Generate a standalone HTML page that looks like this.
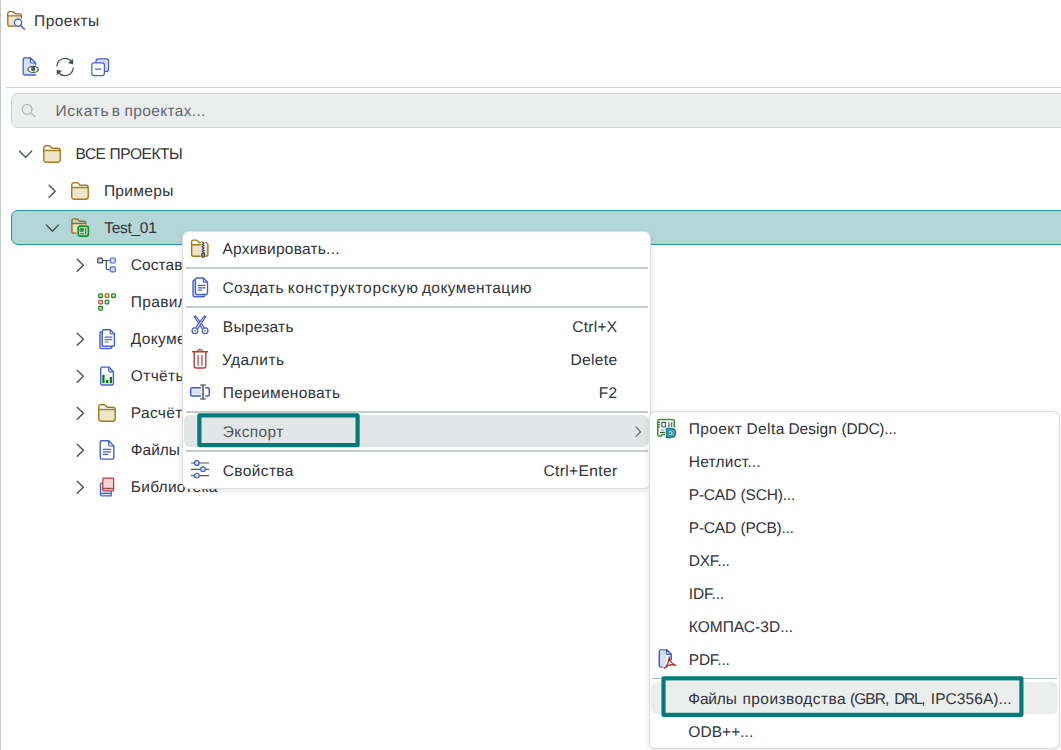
<!DOCTYPE html>
<html lang="ru"><head><meta charset="utf-8"><title>Проекты</title>
<style>
html,body{margin:0;padding:0;}
body{width:1061px;height:750px;overflow:hidden;background:#fff;position:relative;font-family:"Liberation Sans",sans-serif;font-size:15.5px;color:#26272e;text-rendering:geometricPrecision;}
.abs{position:absolute;}
.t{position:absolute;white-space:nowrap;line-height:20px;height:20px;}
svg{position:absolute;overflow:visible;}
.sep{position:absolute;height:2px;background:#c2cece;}
</style></head><body>
<!-- left border -->
<div class="abs" style="left:0;top:0;width:1px;height:750px;background:#bfcbcb"></div>
<!-- hr -->
<div class="abs" style="left:6px;top:87px;width:1055px;height:1px;background:#c8d2d2"></div>
<!-- search -->
<div class="abs" style="left:11px;top:93px;width:1070px;height:33px;background:#eceeee;border:1px solid #c8d4d4;border-radius:7px;"></div>
<!-- selected row -->
<div class="abs" style="left:11px;top:210px;width:1070px;height:33px;background:#b3d6d6;border:1px solid #1f9a96;border-radius:7px;"></div>
<div class="t" style="left:34.10px;top:12.00px;letter-spacing:0.466px;color:#31333b">Проекты</div>
<div class="t" style="left:55.50px;top:102.00px;letter-spacing:0.706px;color:#63676c">Искать</div>
<div class="t" style="left:111.80px;top:102.00px;letter-spacing:0.000px;color:#63676c">в</div>
<div class="t" style="left:124.60px;top:102.00px;letter-spacing:0.336px;color:#63676c">проектах...</div>
<div class="t" style="left:75.60px;top:145.00px;letter-spacing:-0.530px;color:#31333b">ВСЕ</div>
<div class="t" style="left:109.60px;top:145.00px;letter-spacing:-0.428px;color:#31333b">ПРОЕКТЫ</div>
<div class="t" style="left:103.90px;top:182.00px;letter-spacing:0.339px;color:#31333b">Примеры</div>
<div class="t" style="left:104.30px;top:219.00px;letter-spacing:-0.299px;color:#31333b">Test_01</div>
<div class="t" style="left:130.80px;top:256.00px;letter-spacing:0.051px;color:#31333b">Состав</div>
<div class="t" style="left:130.80px;top:293.00px;letter-spacing:0.350px;color:#31333b">Правила</div>
<div class="t" style="left:130.80px;top:330.00px;letter-spacing:0.350px;color:#31333b">Документы</div>
<div class="t" style="left:130.80px;top:367.00px;letter-spacing:0.350px;color:#31333b">Отчёты</div>
<div class="t" style="left:130.80px;top:404.00px;letter-spacing:0.350px;color:#31333b">Расчёты</div>
<div class="t" style="left:130.80px;top:441.00px;letter-spacing:-0.012px;color:#31333b">Файлы</div>
<div class="t" style="left:130.80px;top:478.00px;letter-spacing:0.258px;color:#31333b">Библиотека</div>

<!-- context menu -->
<div class="abs" id="menu" style="left:182px;top:230.5px;width:467.2px;height:256.5px;background:#fff;border:1px solid rgba(0,0,0,.13);border-radius:7px;box-shadow:0 2px 7px rgba(0,0,0,.10);"></div>
<div class="abs" style="left:184px;top:415px;width:464.5px;height:31.6px;background:#e3e6e6;border-radius:6px;"></div>
<div class="sep" style="left:186px;top:267px;width:462px;"></div>
<div class="sep" style="left:186px;top:306px;width:462px;"></div>
<div class="sep" style="left:186px;top:411px;width:462px;"></div>
<div class="sep" style="left:186px;top:450px;width:462px;"></div>
<div class="t" style="left:222.50px;top:240.00px;letter-spacing:0.231px;color:#31333b">Архивировать...</div>
<div class="t" style="left:222.50px;top:279.00px;letter-spacing:0.349px;color:#31333b">Создать</div>
<div class="t" style="left:287.80px;top:279.00px;letter-spacing:0.694px;color:#31333b">конструкторскую</div>
<div class="t" style="left:421.90px;top:279.00px;letter-spacing:0.432px;color:#31333b">документацию</div>
<div class="t" style="left:222.80px;top:318.00px;letter-spacing:0.250px;color:#31333b">Вырезать</div>
<div class="t" style="left:221.90px;top:351.00px;letter-spacing:0.502px;color:#31333b">Удалить</div>
<div class="t" style="left:222.80px;top:384.00px;letter-spacing:0.305px;color:#31333b">Переименовать</div>
<div class="t" style="left:222.80px;top:423.00px;letter-spacing:0.392px;color:#4f545a">Экспорт</div>
<div class="t" style="left:222.80px;top:462.00px;letter-spacing:0.362px;color:#31333b">Свойства</div>
<div class="t" style="left:572.30px;top:318.00px;letter-spacing:0.260px;color:#31333b">Ctrl+X</div>
<div class="t" style="left:570.40px;top:351.00px;letter-spacing:0.378px;color:#31333b">Delete</div>
<div class="t" style="left:598.70px;top:384.00px;letter-spacing:0.306px;color:#31333b">F2</div>
<div class="t" style="left:543.50px;top:462.00px;letter-spacing:0.376px;color:#31333b">Ctrl+Enter</div>


<!-- submenu -->
<div class="abs" id="sub" style="left:648.8px;top:410.6px;width:409.2px;height:336px;background:#fff;border:1px solid rgba(0,0,0,.13);border-radius:7px;box-shadow:0 2px 7px rgba(0,0,0,.10);"></div>
<div class="abs" style="left:651px;top:682px;width:407px;height:32px;background:#eceeee;border-radius:6px;"></div>
<div class="abs" style="left:652px;top:678.3px;width:405px;height:1.2px;background:#b5c0c0"></div>
<div class="t" style="left:688.80px;top:420.00px;letter-spacing:0.387px;color:#31333b">Проект</div>
<div class="t" style="left:746.50px;top:420.00px;letter-spacing:0.403px;color:#31333b">Delta</div>
<div class="t" style="left:788.40px;top:420.00px;letter-spacing:0.030px;color:#31333b">Design</div>
<div class="t" style="left:841.50px;top:420.00px;letter-spacing:-0.218px;color:#31333b">(DDC)...</div>
<div class="t" style="left:688.80px;top:453.00px;letter-spacing:0.221px;color:#31333b">Нетлист...</div>
<div class="t" style="left:688.80px;top:486.00px;letter-spacing:-0.234px;color:#31333b">P-CAD</div>
<div class="t" style="left:740.60px;top:486.00px;letter-spacing:-0.167px;color:#31333b">(SCH)...</div>
<div class="t" style="left:688.80px;top:519.00px;letter-spacing:-0.234px;color:#31333b">P-CAD</div>
<div class="t" style="left:740.60px;top:519.00px;letter-spacing:-0.275px;color:#31333b">(PCB)...</div>
<div class="t" style="left:688.80px;top:552.00px;letter-spacing:-0.241px;color:#31333b">DXF...</div>
<div class="t" style="left:688.80px;top:585.00px;letter-spacing:-0.174px;color:#31333b">IDF...</div>
<div class="t" style="left:688.80px;top:618.00px;letter-spacing:0.022px;color:#31333b">КОМПАС-3D...</div>
<div class="t" style="left:688.80px;top:651.00px;letter-spacing:-0.241px;color:#31333b">PDF...</div>
<div class="t" style="left:688.30px;top:690.00px;letter-spacing:-0.188px;color:#31333b">Файлы</div>
<div class="t" style="left:742.40px;top:690.00px;letter-spacing:0.452px;color:#31333b">производства</div>
<div class="t" style="left:850.00px;top:690.00px;letter-spacing:-0.966px;color:#31333b">(GBR,</div>
<div class="t" style="left:894.20px;top:690.00px;letter-spacing:-1.343px;color:#31333b">DRL,</div>
<div class="t" style="left:930.80px;top:690.00px;letter-spacing:0.067px;color:#31333b">IPC356A)...</div>
<div class="t" style="left:688.30px;top:723.00px;letter-spacing:0.054px;color:#31333b">ODB++...</div>

<svg id="icons" width="1061" height="750" viewBox="0 0 1061 750" style="left:0;top:0;pointer-events:none" fill="none" stroke-linecap="round" stroke-linejoin="round">


<!-- title icon -->
<path d="M7.8 16.4 L21.4 16.4 L21.4 19 L16 26.2 L9.8 26.2 Q7.8 26.2 7.8 24.2 Z" fill="#efe4c5"/>
<path d="M15.4 26.2 L9.8 26.2 Q7.8 26.2 7.8 24.2 L7.8 13.6 Q7.8 11.6 9.8 11.6 L12.4 11.6 Q13.4 11.6 14 12.4 L14.6 13.2 Q15.1 13.9 16 13.9 L19.6 13.9 Q21.4 13.9 21.4 15.6 L21.4 18" fill="none" stroke="#9a7014" stroke-width="1.3"/>
<path d="M7.8 15.9 L21.4 15.9" stroke="#9a7014" stroke-width="1.3"/>
<circle cx="18" cy="22.6" r="4.6" fill="#fff" stroke="none"/>
<circle cx="18" cy="22.6" r="3.6" fill="#fff" stroke="#4a5fd2" stroke-width="1.4"/>
<path d="M20.7 25.4 L24.4 29.3" stroke="#4a5fd2" stroke-width="1.5"/>

<!-- toolbar: doc + eye -->
<path d="M35.6 75 L24.7 75 Q23.2 75 23.2 73.5 L23.2 59.3 Q23.2 57.8 24.7 57.8 L30.4 57.8 L35.6 63 L35.6 65" fill="#d6e0fb" stroke="#4a5fd2" stroke-width="1.3"/>
<path d="M30.4 57.8 L30.4 61.8 Q30.4 63 31.6 63 L35.6 63 Z" fill="#fff" stroke="#4a5fd2" stroke-width="1.2"/>
<ellipse cx="33.1" cy="69.4" rx="6.4" ry="4.2" fill="#fff"/>
<ellipse cx="33.1" cy="69.4" rx="5.2" ry="3" fill="#fff" stroke="#454e4e" stroke-width="1.3"/>
<circle cx="33.2" cy="68.9" r="2.1" fill="#454e4e"/>
<circle cx="32.5" cy="68.2" r="0.6" fill="#9aa0a0"/>

<!-- toolbar: refresh -->
<path d="M56.8 66 A8.3 8.3 0 0 1 71.6 61.6" stroke="#454e4e" stroke-width="1.25"/>
<path d="M73.2 68 A8.3 8.3 0 0 1 58.4 72.4" stroke="#454e4e" stroke-width="1.25"/>
<path d="M72.8 59.6 L73 63.9 L68.8 63 Z" fill="#454e4e" stroke="#454e4e" stroke-width="0.6"/>
<path d="M57.2 74.4 L57 70.1 L61.2 71 Z" fill="#454e4e" stroke="#454e4e" stroke-width="0.6"/>

<!-- toolbar: collapse -->
<rect x="96" y="58.8" width="12.6" height="12.6" rx="2.2" fill="#d6e0fb" stroke="#4a5fd2" stroke-width="1.25"/>
<rect x="91.8" y="62.9" width="12.6" height="12.6" rx="2.2" fill="#fff" stroke="#4a5fd2" stroke-width="1.25"/>
<path d="M95.4 69 L100.8 69" stroke="#4a5fd2" stroke-width="1.25"/>

<!-- search magnifier -->
<circle cx="27.1" cy="109.3" r="4.9" stroke="#a6adad" stroke-width="1.05"/>
<path d="M30.7 112.9 L34.9 116.6" stroke="#a6adad" stroke-width="1.05"/>

<!-- tree chevrons -->
<g transform="translate(19.6 151.2)"><path d="M0 0 L6 6.2 L12 0" stroke="#465050" stroke-width="1.35" fill="none"/></g>
<g transform="translate(49 185.2)"><path d="M0 0 L6.2 6 L0 12" stroke="#465050" stroke-width="1.35" fill="none"/></g>
<g transform="translate(46.4 225)"><path d="M0 0 L6 6.2 L12 0" stroke="#465050" stroke-width="1.35" fill="none"/></g>
<g transform="translate(77.2 259.2)"><path d="M0 0 L6.2 6 L0 12" stroke="#465050" stroke-width="1.35" fill="none"/></g>
<g transform="translate(77.2 333.2)"><path d="M0 0 L6.2 6 L0 12" stroke="#465050" stroke-width="1.35" fill="none"/></g>
<g transform="translate(77.2 370.2)"><path d="M0 0 L6.2 6 L0 12" stroke="#465050" stroke-width="1.35" fill="none"/></g>
<g transform="translate(77.2 407.2)"><path d="M0 0 L6.2 6 L0 12" stroke="#465050" stroke-width="1.35" fill="none"/></g>
<g transform="translate(77.2 444.2)"><path d="M0 0 L6.2 6 L0 12" stroke="#465050" stroke-width="1.35" fill="none"/></g>
<g transform="translate(77.2 481.2)"><path d="M0 0 L6.2 6 L0 12" stroke="#465050" stroke-width="1.35" fill="none"/></g>

<!-- folders -->
<g transform="translate(43 145)">
  <path d="M0.75 5.6 L17.25 5.6 L17.25 14.8 Q17.25 17.25 14.8 17.25 L3.2 17.25 Q0.75 17.25 0.75 14.8 Z" fill="#efe4c5" stroke="none"/>
  <path d="M0.75 3.2 Q0.75 0.75 3.2 0.75 L5.8 0.75 Q7 0.75 7.7 1.7 L8.5 2.7 Q9 3.3 9.8 3.3 L15 3.3 Q17.25 3.3 17.25 5.5 L17.25 14.8 Q17.25 17.25 14.8 17.25 L3.2 17.25 Q0.75 17.25 0.75 14.8 Z" fill="none" stroke="#a57d22" stroke-width="1.4"/>
  <path d="M0.75 5.5 L17.25 5.5" stroke="#a57d22" stroke-width="1.5"/></g>
<g transform="translate(71 182)">
  <path d="M0.75 5.6 L17.25 5.6 L17.25 14.8 Q17.25 17.25 14.8 17.25 L3.2 17.25 Q0.75 17.25 0.75 14.8 Z" fill="#efe4c5" stroke="none"/>
  <path d="M0.75 3.2 Q0.75 0.75 3.2 0.75 L5.8 0.75 Q7 0.75 7.7 1.7 L8.5 2.7 Q9 3.3 9.8 3.3 L15 3.3 Q17.25 3.3 17.25 5.5 L17.25 14.8 Q17.25 17.25 14.8 17.25 L3.2 17.25 Q0.75 17.25 0.75 14.8 Z" fill="none" stroke="#a57d22" stroke-width="1.4"/>
  <path d="M0.75 5.5 L17.25 5.5" stroke="#a57d22" stroke-width="1.5"/></g>
<g transform="translate(98 404)">
  <path d="M0.75 5.6 L17.25 5.6 L17.25 14.8 Q17.25 17.25 14.8 17.25 L3.2 17.25 Q0.75 17.25 0.75 14.8 Z" fill="#efe4c5" stroke="none"/>
  <path d="M0.75 3.2 Q0.75 0.75 3.2 0.75 L5.8 0.75 Q7 0.75 7.7 1.7 L8.5 2.7 Q9 3.3 9.8 3.3 L15 3.3 Q17.25 3.3 17.25 5.5 L17.25 14.8 Q17.25 17.25 14.8 17.25 L3.2 17.25 Q0.75 17.25 0.75 14.8 Z" fill="none" stroke="#a57d22" stroke-width="1.4"/>
  <path d="M0.75 5.5 L17.25 5.5" stroke="#a57d22" stroke-width="1.5"/></g>

<!-- project folder -->
<path d="M71.9 223.6 L85.6 223.6 L85.6 226 L77 226 L77 233.1 L73.8 233.1 Q71.9 233.1 71.9 231.2 Z" fill="#e9dfc0"/>
<path d="M76 233.1 L73.8 233.1 Q71.9 233.1 71.9 231.2 L71.9 220.8 Q71.9 218.9 73.8 218.9 L76.4 218.9 Q77.4 218.9 78 219.7 L78.6 220.5 Q79.2 221.3 80.2 221.3 L83.8 221.3 Q85.6 221.3 85.6 223 L85.6 223.6" fill="none" stroke="#9a6d10" stroke-width="1.4"/>
<path d="M71.9 223.6 L85.6 223.6" stroke="#9a6d10" stroke-width="1.5"/>
<rect x="78.2" y="226.1" width="10.2" height="10" rx="2.2" fill="#bfe0c4" stroke="#1f8c2c" stroke-width="1.6"/>
<rect x="80.4" y="228.3" width="3" height="3" fill="#2a9a3a" stroke="#1f8c2c" stroke-width="0.8"/>
<path d="M80.2 233.7 L83.6 233.7 M85.7 228.2 L85.7 233.8" stroke="#1f8c2c" stroke-width="1.1"/>

<!-- Состав -->
<rect x="97.7" y="258.1" width="4.8" height="4.8" rx="1" fill="#d7dcdc" stroke="#454e4e" stroke-width="1.2"/>
<path d="M103.4 260.5 L109 260.5 M106.3 260.5 L106.3 268.4 Q106.3 269.5 107.4 269.5 L109 269.5" stroke="#454e4e" stroke-width="1.2"/>
<rect x="110.3" y="258" width="5" height="5" rx="1.2" fill="#d6e0fb" stroke="#5468d8" stroke-width="1.2"/>
<rect x="110.3" y="266.9" width="5" height="5" rx="1.2" fill="#d6e0fb" stroke="#5468d8" stroke-width="1.2"/>

<!-- Правила -->
<g stroke-width="1.3">
<rect x="98.8" y="293.9" width="3.6" height="3.6" rx="0.8" fill="#cfe8d2" stroke="#1f8c2c"/>
<rect x="105.2" y="293.9" width="3.6" height="3.6" rx="0.8" fill="#f3e6c8" stroke="#a07418"/>
<rect x="111.7" y="293.9" width="3.6" height="3.6" rx="0.8" fill="#cfe8d2" stroke="#1f8c2c"/>
<rect x="98.8" y="300.3" width="3.6" height="3.6" rx="0.8" fill="#fde0e0" stroke="#c84a4a"/>
<rect x="105.2" y="300.3" width="3.6" height="3.6" rx="0.8" fill="#cfe8d2" stroke="#1f8c2c"/>
<rect x="98.8" y="306.5" width="3.6" height="3.6" rx="0.8" fill="#cfe8d2" stroke="#1f8c2c"/>
</g>

<!-- Документы -->
<g transform="translate(99.2 329)">
  <path d="M3 2.8 L2.2 2.8 Q0.75 2.8 0.75 4.3 L0.75 18 Q0.75 19.6 2.3 19.6 L11 19.6 Q12.5 19.6 12.5 18.2" fill="#d6e0fb" stroke="#4a5fd2" stroke-width="1.4"/>
  <path d="M4.6 0.75 L11 0.75 L15.2 5 L15.2 15.8 Q15.2 17.3 13.7 17.3 L4.6 17.3 Q3.1 17.3 3.1 15.8 L3.1 2.25 Q3.1 0.75 4.6 0.75 Z" fill="#fff" stroke="#4a5fd2" stroke-width="1.4"/>
  <path d="M11 0.75 L11 4 Q11 5 12 5 L15.2 5" stroke="#4a5fd2" stroke-width="1.2"/>
  <path d="M6 8.2 L12.6 8.2 M6 10.6 L12.6 10.6 M6 13 L9 13" stroke="#4a5fd2" stroke-width="1.2"/></g>

<!-- Отчёты -->
<path d="M102.2 367.1 L108.8 367.1 L113.4 371.8 L113.4 383.5 Q113.4 385 111.9 385 L102.2 385 Q100.7 385 100.7 383.5 L100.7 368.6 Q100.7 367.1 102.2 367.1 Z" fill="#fff" stroke="#4a5fd2" stroke-width="1.4"/>
<path d="M108.8 367.1 L108.8 370.8 Q108.8 371.8 109.8 371.8 L113.4 371.8" stroke="#4a5fd2" stroke-width="1.2"/>
<rect x="102.3" y="374.8" width="2.3" height="8.4" fill="#0a7a10"/>
<rect x="106" y="380" width="2.3" height="3.2" fill="#0a7a10"/>
<rect x="109.7" y="377" width="2.3" height="6.2" fill="#0a7a10"/>

<!-- Файлы -->
<path d="M101.7 440.8 L108.6 440.8 L113.8 446 L113.8 457.6 Q113.8 459.1 112.3 459.1 L101.7 459.1 Q100.2 459.1 100.2 457.6 L100.2 442.3 Q100.2 440.8 101.7 440.8 Z" fill="#fff" stroke="#4a5fd2" stroke-width="1.4"/>
<path d="M108.6 440.8 L108.6 445 Q108.6 446 109.6 446 L113.8 446" stroke="#4a5fd2" stroke-width="1.2"/>
<path d="M103.4 449.4 L110.6 449.4 M103.4 451.9 L110.6 451.9 M103.4 454.4 L107.6 454.4" stroke="#4a5fd2" stroke-width="1.2"/>

<!-- Библиотека -->
<path d="M102.4 483.2 L101.6 483.2 Q100.4 483.2 100.4 484.4 L100.4 494.4 Q100.4 495.8 101.8 495.8 L111.2 495.8 L111.2 491.4" fill="#d6e0fb" stroke="#4a5fd2" stroke-width="1.3"/>
<path d="M100.6 493.4 L111 493.4" stroke="#4a5fd2" stroke-width="1.1"/>
<rect x="102.8" y="478" width="10.8" height="12.9" rx="1.3" fill="#fcd4d6" stroke="#c03a3a" stroke-width="1.25"/>
<path d="M103 488.4 L113.4 488.4" stroke="#c03a3a" stroke-width="1.1"/>

<!-- MENU ICONS -->
<!-- archive -->
<path d="M191.6 244.8 L207.9 244.8 L207.9 254.5 Q207.9 256.3 206.2 256.3 L193.4 256.3 Q191.6 256.3 191.6 254.5 Z" fill="#efe4c5"/>
<path d="M201 256.3 L193.4 256.3 Q191.6 256.3 191.6 254.5 L191.6 241.9 Q191.6 240.1 193.4 240.1 L196 240.1 Q197 240.1 197.7 240.9 L198.4 241.8 Q199 242.6 200 242.6 L201 242.6" fill="none" stroke="#a07418" stroke-width="1.4"/>
<path d="M191.6 244.8 L201 244.8" stroke="#a07418" stroke-width="1.5"/>
<path d="M205.4 242.6 L206.2 242.6 Q207.9 242.6 207.9 244.4 L207.9 254.5 Q207.9 256.3 206.2 256.3 L205.4 256.3" fill="none" stroke="#a07418" stroke-width="1.4"/>
<path d="M203.1 241 L203.1 257.6" stroke="#fff" stroke-width="4.6" stroke-linecap="butt"/>
<path d="M202 242 L204.2 243.2 L202 244.4 L204.2 245.6 L202 246.8 L204.2 248 L202 249.2 L204.2 250.4 L202 251.6 L204.2 252.8" stroke="#3f4848" stroke-width="1.1" fill="none"/>
<rect x="201.7" y="253.2" width="2.9" height="4" rx="0.9" fill="#8a9090" stroke="#3f4848" stroke-width="1.1"/>

<!-- docs -->
<g transform="translate(192.3 277.2)">
  <path d="M3 2.8 L2.2 2.8 Q0.75 2.8 0.75 4.3 L0.75 18 Q0.75 19.6 2.3 19.6 L11 19.6 Q12.5 19.6 12.5 18.2" fill="#d6e0fb" stroke="#4a5fd2" stroke-width="1.4"/>
  <path d="M4.6 0.75 L11 0.75 L15.2 5 L15.2 15.8 Q15.2 17.3 13.7 17.3 L4.6 17.3 Q3.1 17.3 3.1 15.8 L3.1 2.25 Q3.1 0.75 4.6 0.75 Z" fill="#fff" stroke="#4a5fd2" stroke-width="1.4"/>
  <path d="M11 0.75 L11 4 Q11 5 12 5 L15.2 5" stroke="#4a5fd2" stroke-width="1.2"/>
  <path d="M6 8.2 L12.6 8.2 M6 10.6 L12.6 10.6 M6 13 L9 13" stroke="#4a5fd2" stroke-width="1.2"/></g>

<!-- scissors -->
<g stroke="#4a5fd2" stroke-width="1.2">
<path d="M194.2 316.6 L195.8 316.2 L204.6 328.2 L202.8 329.4 Z" fill="#fff"/>
<path d="M205.8 316.6 L204.2 316.2 L195.4 328.2 L197.2 329.4 Z" fill="#fff"/>
<circle cx="194.9" cy="330.8" r="2.85" fill="#fff" stroke-width="1.3"/>
<circle cx="205.1" cy="330.8" r="2.85" fill="#fff" stroke-width="1.3"/>
</g>
<circle cx="195" cy="330.9" r="0.8" fill="#4a5fd2"/>
<circle cx="205" cy="330.9" r="0.8" fill="#4a5fd2"/>

<!-- trash -->
<g stroke="#c03a3a" stroke-width="1.4">
<path d="M192.6 351.7 L207.4 351.7"/>
<path d="M198 351.5 L198 350.6 Q198 349.6 199 349.6 L201 349.6 Q202 349.6 202 350.6 L202 351.5"/>
<path d="M194.2 352 L194.2 366 Q194.2 368 196.2 368 L203.8 368 Q205.8 368 205.8 366 L205.8 352"/>
<path d="M198.1 355.4 L198.1 365.2 M201.9 355.4 L201.9 365.2" stroke-width="1.2"/>
</g>

<!-- rename -->
<path d="M200.8 387.8 L192.4 387.8 Q190.7 387.8 190.7 389.5 L190.7 394.4 Q190.7 396.1 192.4 396.1 L200.8 396.1" fill="#e8eefd" stroke="#4258cc" stroke-width="1.5" stroke-linecap="butt"/>
<rect x="193.4" y="390.1" width="7.4" height="3.7" fill="#d6e0fb"/>
<path d="M205.4 387.8 L207.6 387.8 Q209.3 387.8 209.3 389.5 L209.3 394.4 Q209.3 396.1 207.6 396.1 L205.4 396.1" stroke="#4258cc" stroke-width="1.5" stroke-linecap="butt"/>
<path d="M203 385 L203 399" stroke="#6c7676" stroke-width="1.9" stroke-linecap="butt"/>
<path d="M200.2 385.1 L205.8 385.1 M200.2 398.9 L205.8 398.9" stroke="#6c7676" stroke-width="1.5" stroke-linecap="butt"/>

<!-- arrow -->
<path d="M636 427.2 L640.6 431.8 L636 436.4" stroke="#555c5c" stroke-width="1.1"/>

<!-- sliders -->
<path d="M191.4 463 L208.6 463 M191.4 469.3 L208.6 469.3 M191.4 475.6 L208.6 475.6" stroke="#4f5858" stroke-width="1.2"/>
<g fill="#dde5fc" stroke="#4258cc" stroke-width="1.15">
<circle cx="196.8" cy="463" r="2.35"/><circle cx="203" cy="469.3" r="2.35"/><circle cx="196.8" cy="475.6" r="2.35"/>
</g>

<!-- DDC icon -->
<path d="M664.4 434.6 L662.4 434.6 L661 436.1 L659 436.1 Q657.8 436.1 657.8 434.8 L657.8 421 Q657.8 419.6 659.2 419.6 L672.8 419.6 Q674.2 419.6 674.2 421 L674.2 427" stroke="#2a9a30" stroke-width="1.5"/>
<path d="M658 422.4 L659.6 422.4 M658 424.6 L659.6 424.6 M658 426.9 L659.6 426.9" stroke="#2a9a30" stroke-width="1.2"/>
<rect x="661.9" y="422.4" width="3.6" height="4.6" rx="0.6" stroke="#454e4e" stroke-width="1.1"/>
<path d="M668.9 422.2 L668.9 427 M671.6 422.2 L671.6 427" stroke="#6a7272" stroke-width="1.4" stroke-linecap="butt"/>
<path d="M661 430 L664.6 430" stroke="#9aa0a0" stroke-width="1.2" stroke-linecap="butt"/>
<path d="M660 432.4 L664.8 432.4" stroke="#454e4e" stroke-width="1.2" stroke-linecap="butt"/>
<path d="M666.6 428.6 L670.4 428.6 Q675.4 428.6 675.4 433 Q675.4 437.4 670.4 437.4 L666.6 437.4 Z" fill="#8fc3cb" stroke="#0d7a8a" stroke-width="1.6"/>
<path d="M668.6 430.6 L670.2 430.6 Q673.2 430.6 673.2 433 Q673.2 435.4 670.2 435.4 L668.6 435.4 Z" fill="#d5ecef" stroke="#0d7a8a" stroke-width="1"/>
<circle cx="670.4" cy="433" r="1" fill="#0d7a8a"/>

<!-- PDF icon -->
<path d="M662.8 667 L660.8 667 Q659.3 667 659.3 665.5 L659.3 651.4 Q659.3 649.9 660.8 649.9 L666.6 649.9 L671.2 654.4 L671.2 659.6" stroke="#4258cc" stroke-width="1.5"/>
<path d="M660 650.6 L666.4 650.6 L666.4 662 L663.6 666.4 L660 666.4 Z" fill="#d6e0fb"/>
<path d="M666.6 649.9 L666.6 653.4 Q666.6 654.4 667.6 654.4 L671.2 654.4 Z" fill="#fff" stroke="#4258cc" stroke-width="1.3"/>
<path d="M664.4 668.2 Q668.6 664.6 669.2 657 Q669.8 662.6 675.6 665.4 Q669.2 663.2 664.4 668.2 Z" fill="#fff" stroke="#b83232" stroke-width="1.3"/>
<!-- teal callouts -->
<rect x="199.4" y="415.4" width="158.2" height="29.8" rx="0.2" stroke="#027c7b" stroke-width="4.2" stroke-linejoin="round"/>
<rect x="663.5" y="678.35" width="357.9" height="36.5" rx="0.2" stroke="#027c7b" stroke-width="4.2" stroke-linejoin="round"/>
</svg>
</body></html>
